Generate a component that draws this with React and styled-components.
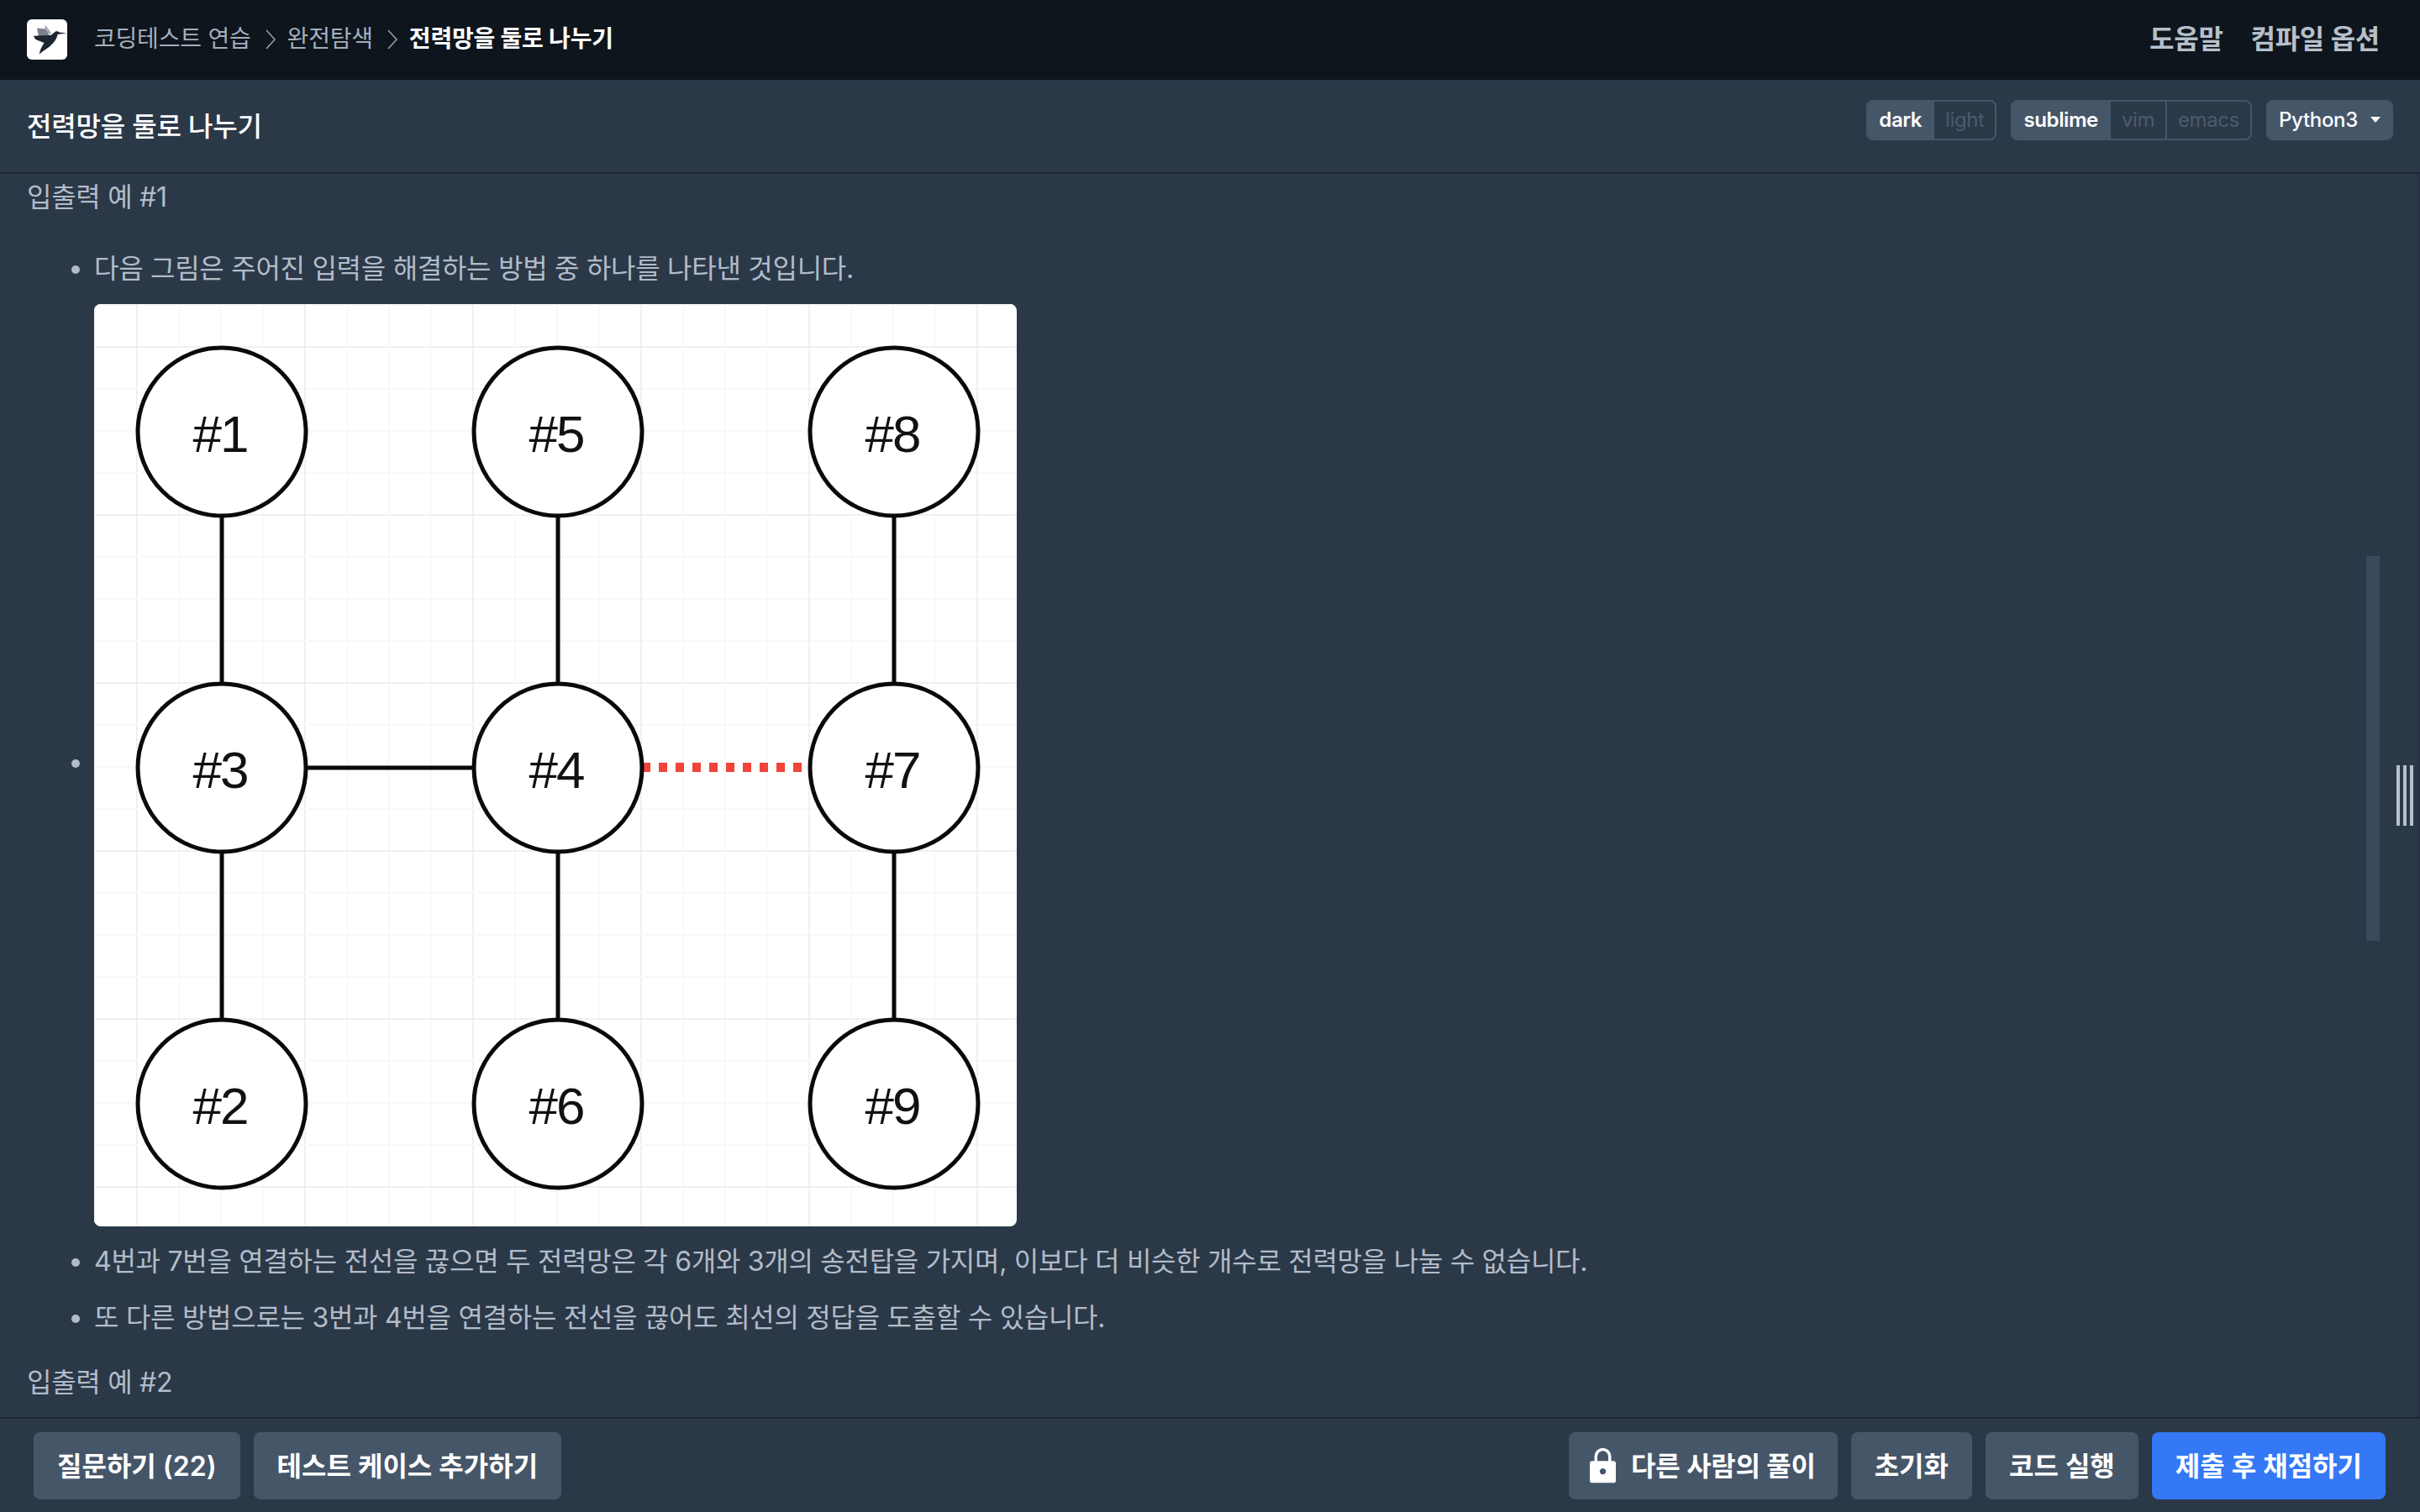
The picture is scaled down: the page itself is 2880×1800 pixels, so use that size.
import React from 'react';
import styled, { createGlobalStyle } from 'styled-components';

const NODES = [
  { label: '#1', col: 0, row: 0 },
  { label: '#5', col: 1, row: 0 },
  { label: '#8', col: 2, row: 0 },
  { label: '#3', col: 0, row: 1 },
  { label: '#4', col: 1, row: 1 },
  { label: '#7', col: 2, row: 1 },
  { label: '#2', col: 0, row: 2 },
  { label: '#6', col: 1, row: 2 },
  { label: '#9', col: 2, row: 2 },
];

const EDGES = [
  [152, 252, 152, 452],
  [552, 252, 552, 452],
  [952, 252, 952, 452],
  [252, 552, 452, 552],
  [152, 652, 152, 852],
  [552, 652, 552, 852],
  [952, 652, 952, 852],
];

const pos = (n) => 152 + n * 400;

const NetworkFigure = () => {
  const lines = [];
  for (let i = 0; i < 22; i++) lines.push(1 + i * 50);
  return (
    <Figure viewBox="0 0 1098 1098" width="1098" height="1098">
      {lines.map((v, i) => {
        const major = i % 4 === 1;
        const color = major ? '#f0f0f0' : '#f9f9f9';
        return (
          <g key={v} stroke={color} strokeWidth="2">
            <line x1={v} y1="0" x2={v} y2="1098" />
            <line x1="0" y1={v} x2="1098" y2={v} />
          </g>
        );
      })}
      {EDGES.map((e, i) => (
        <line key={i} x1={e[0]} y1={e[1]} x2={e[2]} y2={e[3]} stroke="#0a0a0a" strokeWidth="5" />
      ))}
      <line x1="652" y1="551.5" x2="843" y2="551.5" stroke="#f04438" strokeWidth="11" strokeDasharray="10 10" />
      {NODES.map((n) => (
        <g key={n.label}>
          <circle cx={pos(n.col)} cy={pos(n.row)} r="100" fill="#ffffff" stroke="#0a0a0a" strokeWidth="5" />
          <NodeLabel x={pos(n.col) - 2} y={pos(n.row) + 24}>{n.label}</NodeLabel>
        </g>
      ))}
    </Figure>
  );
};

const Logo = () => (
  <LogoBox>
    <svg viewBox="0 0 48 48" width="48" height="48">
      <path d="M20 18 L22 6.5 L29.5 17 Z" fill="#a9adb5" />
      <path d="M12 10.5 L13.8 20 L27 20 L22 11.5 Z" fill="#7b808b" />
      <path
        d="M47.3 16.3 L38.5 15.6 C37 13.8 34.3 13.8 32.8 15.6 L29 18.8 L8 19.8 C9 23 11.2 25 14.2 25.6 L20.5 28 C18 32 15.4 37 14.7 41.5 C20 37 26 34 30 29.5 C33.6 26.6 35.6 22.4 36.6 18 Z"
        fill="#1e2533"
      />
    </svg>
  </LogoBox>
);

const Chevron = () => (
  <ChevronIcon viewBox="0 0 12 24" width="12" height="24">
    <polyline points="1,1 11,12 1,23" fill="none" stroke="#98a4b3" strokeWidth="1.5" />
  </ChevronIcon>
);

const LockIcon = () => (
  <LockSvg viewBox="0 0 32 42" width="31" height="42">
    <path d="M7.5 18 V9.5 a8.5 8.5 0 0 1 17 0 V18" fill="none" stroke="#ffffff" strokeWidth="3.6" />
    <path
      fillRule="evenodd"
      d="M3 15 H29 a3 3 0 0 1 3 3 V39 a3 3 0 0 1 -3 3 H3 a3 3 0 0 1 -3 -3 V18 a3 3 0 0 1 3 -3 Z M16 24 a3.8 3.8 0 1 0 0.01 0 Z"
      fill="#ffffff"
    />
  </LockSvg>
);

const App = () => {
  return (
    <Page>
      <GlobalStyle />
      <TopBar>
        <Breadcrumb>
          <Logo />
          <Crumb>코딩테스트 연습</Crumb>
          <Chevron />
          <Crumb>완전탐색</Crumb>
          <Chevron />
          <Crumb $current>전력망을 둘로 나누기</Crumb>
        </Breadcrumb>
        <TopNav>
          <TopLink>도움말</TopLink>
          <TopLink>컴파일 옵션</TopLink>
        </TopNav>
      </TopBar>

      <TitleBar>
        <Title>전력망을 둘로 나누기</Title>
        <Controls>
          <Toggle>
            <ToggleItem $active>dark</ToggleItem>
            <ToggleItem>light</ToggleItem>
          </Toggle>
          <Toggle>
            <ToggleItem $active>sublime</ToggleItem>
            <ToggleItem>vim</ToggleItem>
            <ToggleItem>emacs</ToggleItem>
          </Toggle>
          <Dropdown>Python3<Caret /></Dropdown>
        </Controls>
      </TitleBar>

      <Content>
        <Heading>입출력 예 #1</Heading>
        <List>
          <Item>다음 그림은 주어진 입력을 해결하는 방법 중 하나를 나타낸 것입니다.</Item>
          <Item><NetworkFigure /></Item>
          <Item>4번과 7번을 연결하는 전선을 끊으면 두 전력망은 각 6개와 3개의 송전탑을 가지며, 이보다 더 비슷한 개수로 전력망을 나눌 수 없습니다.</Item>
          <Item>또 다른 방법으로는 3번과 4번을 연결하는 전선을 끊어도 최선의 정답을 도출할 수 있습니다.</Item>
        </List>
        <Heading>입출력 예 #2</Heading>
        <Scrollbar />
        <Handle><i /><i /><i /></Handle>
      </Content>

      <Footer>
        <ButtonRow>
          <Button>질문하기 (22)</Button>
          <Button>테스트 케이스 추가하기</Button>
        </ButtonRow>
        <ButtonRow>
          <LockButton><LockIcon />다른 사람의 풀이</LockButton>
          <Button>초기화</Button>
          <Button>코드 실행</Button>
          <Button $primary>제출 후 채점하기</Button>
        </ButtonRow>
      </Footer>
    </Page>
  );
};

export default App;

const FONT = `Inter, "Noto Sans CJK KR", "Noto Sans", sans-serif`;

const GlobalStyle = createGlobalStyle`
  html, body {
    margin: 0;
    padding: 0;
    background: #2b3848;
  }
  * {
    box-sizing: border-box;
  }
`;

const Page = styled.div`
  display: flex;
  flex-direction: column;
  width: 2880px;
  height: 1800px;
  overflow: hidden;
  background: #2b3848;
  font-family: ${FONT};
`;

const TopBar = styled.header`
  display: flex;
  align-items: center;
  justify-content: space-between;
  flex: 0 0 95px;
  padding: 0 48px 2px 32px;
  background: #0e151c;
`;

const Breadcrumb = styled.nav`
  display: flex;
  align-items: center;
`;

const LogoBox = styled.div`
  display: flex;
  width: 48px;
  height: 48px;
  margin-right: 32px;
  border-radius: 6px;
  overflow: hidden;
  background: #ffffff;
`;

const Crumb = styled.span`
  margin-bottom: 2px;
  font-size: 28px;
  line-height: 40px;
  letter-spacing: -0.2px;
  font-weight: ${(p) => (p.$current ? 700 : 400)};
  color: ${(p) => (p.$current ? '#ffffff' : '#a4afbd')};
`;

const ChevronIcon = styled.svg`
  margin: 0 14px 0 17px;
`;

const TopNav = styled.div`
  display: flex;
  gap: 33px;
`;

const TopLink = styled.span`
  font-size: 32px;
  line-height: 44px;
  letter-spacing: -0.3px;
  font-weight: 600;
  color: #b6c0ca;
`;

const TitleBar = styled.div`
  display: flex;
  align-items: flex-start;
  justify-content: space-between;
  flex: 0 0 112px;
  padding: 24px 32px 0;
  border-bottom: 2px solid #1d2636;
`;

const Title = styled.h1`
  margin: 0;
  padding-top: 10px;
  font-size: 32px;
  line-height: 44px;
  letter-spacing: -0.2px;
  font-weight: 500;
  color: #ffffff;
`;

const Controls = styled.div`
  display: flex;
  gap: 17px;
`;

const Toggle = styled.div`
  display: flex;
  height: 48px;
  border: 2px solid #465669;
  border-radius: 8px;
  overflow: hidden;
`;

const ToggleItem = styled.span`
  display: flex;
  align-items: center;
  padding: 0 13px 2px;
  font-size: 24px;
  letter-spacing: -0.4px;
  font-weight: ${(p) => (p.$active ? 600 : 400)};
  color: ${(p) => (p.$active ? '#ffffff' : '#4b5a6e')};
  background: ${(p) => (p.$active ? '#465669' : 'transparent')};

  & + & {
    border-left: 2px solid #465669;
  }
`;

const Dropdown = styled.div`
  display: flex;
  align-items: center;
  gap: 15px;
  height: 48px;
  padding: 0 15px 2px;
  border-radius: 8px;
  font-size: 24px;
  letter-spacing: -0.3px;
  font-weight: 500;
  color: #ffffff;
  background: #465669;
`;

const Caret = styled.span`
  width: 0;
  height: 0;
  border-top: 7px solid #ffffff;
  border-left: 6px solid transparent;
  border-right: 6px solid transparent;
`;

const Content = styled.main`
  position: relative;
  flex: 1 1 auto;
  min-height: 0;
  padding: 2px 0 0 32px;
  border-right: 2px solid #263243;
  overflow: hidden;
  color: #b2bcc8;
`;

const Heading = styled.div`
  font-size: 32px;
  line-height: 52px;
  letter-spacing: -0.28px;
`;

const List = styled.ul`
  margin: 33px 0 26px;
  padding: 0 0 0 80px;
  list-style: disc;
`;

const Item = styled.li`
  margin-bottom: 16px;
  font-size: 32px;
  line-height: 51px;
  letter-spacing: -0.28px;
`;

const Figure = styled.svg`
  display: inline-block;
  vertical-align: middle;
  margin-top: 1px;
  border-radius: 8px;
  background: #ffffff;
`;

const NodeLabel = styled.text`
  font-family: "Liberation Sans", Arial, sans-serif;
  font-size: 62px;
  letter-spacing: -2px;
  fill: #111111;
  text-anchor: middle;
`;

const Scrollbar = styled.div`
  position: absolute;
  top: 455px;
  right: 46px;
  width: 16px;
  height: 458px;
  background: #3a495c;
`;

const Handle = styled.div`
  position: absolute;
  top: 704px;
  right: 6px;
  display: flex;
  gap: 4px;
  height: 72px;

  i {
    display: block;
    width: 4px;
    background: #b6c2ca;
  }
`;

const Footer = styled.footer`
  display: flex;
  justify-content: space-between;
  flex: 0 0 113px;
  padding: 16px 41px 0 40px;
  border-top: 2px solid #1d2636;
`;

const ButtonRow = styled.div`
  display: flex;
  gap: 16px;
`;

const Button = styled.button`
  display: flex;
  align-items: center;
  height: 80px;
  padding: 0 28px 5px;
  border: none;
  border-radius: 8px;
  font-family: ${FONT};
  font-size: 32px;
  font-weight: 600;
  color: #ffffff;
  background: ${(p) => (p.$primary ? '#3478f6' : '#465669')};
`;

const LockButton = styled(Button)`
  gap: 18px;
  padding: 0 26px 5px 25px;
  letter-spacing: -0.3px;
`;

const LockSvg = styled.svg`
  margin-top: 4px;
`;
